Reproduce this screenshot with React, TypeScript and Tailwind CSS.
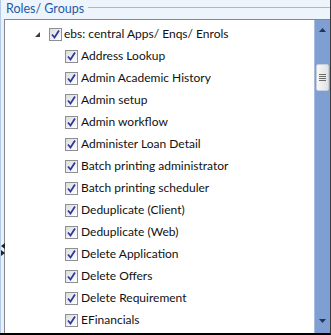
import React from 'react';

const items = [
  'Address Lookup',
  'Admin Academic History',
  'Admin setup',
  'Admin workflow',
  'Administer Loan Detail',
  'Batch printing administrator',
  'Batch printing scheduler',
  'Deduplicate (Client)',
  'Deduplicate (Web)',
  'Delete Application',
  'Delete Offers',
  'Delete Requirement',
  'EFinancials',
];

function Check() {
  return (
    <span className="flex h-[13px] w-[13px] shrink-0 items-center justify-center border border-[#8e8f8f] bg-[linear-gradient(135deg,#dcdcdc,#ffffff)]">
      <svg width="11" height="11" viewBox="0 0 11 11">
        <path d="M2 5.5 L4.5 8.5 L9 1.5" fill="none" stroke="#2c3a9c" strokeWidth="1.8" />
      </svg>
    </span>
  );
}

export default function App() {
  return (
    <div
      className="flex h-[335px] w-[331px] flex-col border-r border-b-2 border-r-[#3b3b3b] border-b-black bg-[#e8f0fa] text-[12px]"
      style={{ fontFamily: '"Segoe UI", Lato, sans-serif' }}
    >
      <div className="flex h-[19px] items-center border-l border-[#b4cbe8] bg-[#eef4fc] pl-[5px]">
        <span className="text-[12.5px] leading-none text-[#1f5aa5]">Roles/ Groups</span>
        <div className="ml-[4px] mt-[-5px] h-px flex-1 bg-[#9dbbe3]" />
      </div>
      <div className="relative flex min-h-0 flex-1 border-l border-[#b4cbe8] pl-[3px]">
        <div className="absolute left-0 top-[224px] flex flex-col gap-[1px]">
          <svg width="4" height="6" viewBox="0 0 4 6"><path d="M4 0 L0 3 L4 6 Z" fill="#222" /></svg>
          <svg width="4" height="6" viewBox="0 0 4 6"><path d="M0 0 L4 3 L0 6 Z" fill="#222" /></svg>
        </div>
        <div className="flex min-w-0 flex-1 border-l border-t border-[#828790] bg-white">
          <div className="flex min-w-0 flex-1 flex-col pt-[3px] text-[#111]">
            <div className="flex h-[22px] items-center pl-[29px]">
              <svg width="7" height="7" viewBox="0 0 7 7" className="mr-[8px]">
                <path d="M6 1 L6 6 L1 6 Z" fill="#3c3c3c" />
              </svg>
              <Check />
              <span className="ml-[2px] whitespace-nowrap">ebs: central Apps/ Enqs/ Enrols</span>
            </div>
            {items.map((t) => (
              <div key={t} className="flex h-[22px] items-center pl-[60px]">
                <Check />
                <span className="ml-[3px] whitespace-nowrap">{t}</span>
              </div>
            ))}
          </div>
          <div className="flex w-[16px] flex-col items-center border-l border-[#a9bedf] bg-[#7f9ed2] pt-[8px] pb-[10px]">
            <svg width="7" height="4" viewBox="0 0 7 4"><path d="M0 4 L3.5 0 L7 4 Z" fill="#1e3560" /></svg>
            <div className="mt-[32px] flex h-[27px] w-[13px] flex-col items-center justify-center gap-[1px] rounded-[2px] border border-[#c7cfdc] bg-[linear-gradient(90deg,#f7f7f7,#e2e2e2)]">
              <div className="h-px w-[7px] bg-[#6c6c6c]" />
              <div className="h-px w-[7px] bg-[#6c6c6c]" />
              <div className="h-px w-[7px] bg-[#6c6c6c]" />
              <div className="h-px w-[7px] bg-[#6c6c6c]" />
            </div>
            <div className="flex-1" />
            <svg width="7" height="4" viewBox="0 0 7 4"><path d="M0 0 L3.5 4 L7 0 Z" fill="#1e3560" /></svg>
          </div>
        </div>
      </div>
    </div>
  );
}
